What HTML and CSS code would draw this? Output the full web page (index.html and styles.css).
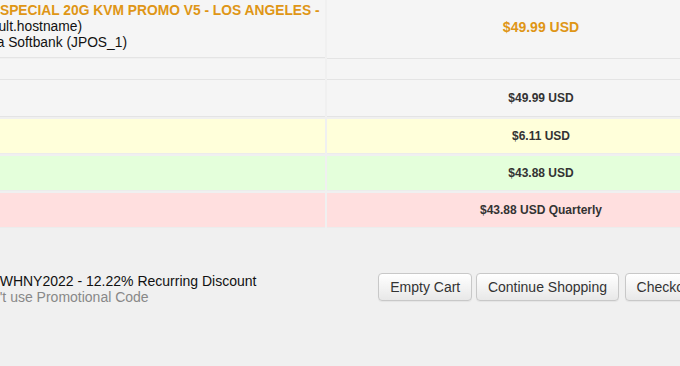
FILE: index.html
```html
<!DOCTYPE html>
<html lang="en">
<head>
    <title>Shopping Cart</title>
    <link rel="stylesheet" href="styles.css">
</head>
<body>
    <div class="cart">
        <div class="row product">
            <div class="cell desc">
                <div class="name">HOT SPECIAL 20G KVM PROMO V5 - LOS ANGELES -</div>
                <div>(default.hostname)</div>
                <div>JP via Softbank (JPOS_1)</div>
            </div>
            <div class="cell price">$49.99 USD</div>
        </div>
        <div class="row blank">
            <div class="cell"></div>
            <div class="cell"></div>
        </div>
        <div class="row subtotal">
            <div class="cell"></div>
            <div class="cell amount">$49.99 USD</div>
        </div>
        <div class="row discount">
            <div class="cell"></div>
            <div class="cell amount">$6.11 USD</div>
        </div>
        <div class="row total">
            <div class="cell"></div>
            <div class="cell amount">$43.88 USD</div>
        </div>
        <div class="row recurring">
            <div class="cell"></div>
            <div class="cell amount">$43.88 USD Quarterly</div>
        </div>

        <div class="actions">
            <div class="promo">
                <div>JPSWHNY2022 - 12.22% Recurring Discount</div>
                <div class="remove">Don't use Promotional Code</div>
            </div>
            <div class="buttons">
                <button class="btn">Empty Cart</button>
                <button class="btn">Continue Shopping</button>
                <button class="btn checkout">Checkout</button>
            </div>
        </div>
    </div>
</body>
</html>
```

FILE: styles.css
```css
body {
    margin: 0;
    background-color: #f0f0f0;
    font-family: "Liberation Sans", Arial, sans-serif;
    font-size: 13px;
    color: #222;
    overflow: hidden;
}

.cart {
    width: 795px;
    margin: -4px 0 0 -40px;
}

.row {
    display: grid;
    grid-template-columns: 365px 428px;
    column-gap: 2px;
}

.cell {
    background-color: #f5f5f5;
    border-bottom: 1px solid #e4e4e4;
}

.product .cell {
    height: 62px;
}

.desc {
    box-sizing: border-box;
    padding: 7px 7px;
    font-size: 13.8px;
    line-height: 16px;
    color: #111;
    white-space: nowrap;
}

.desc .name {
    color: #df9616;
    font-weight: bold;
}

.price,
.amount {
    display: flex;
    align-items: center;
    justify-content: center;
    font-weight: bold;
}

.price {
    color: #df9616;
    font-size: 14px;
}

.amount {
    font-size: 12px;
    color: #333;
}

.blank .cell {
    height: 20px;
}

.subtotal .cell {
    height: 36px;
}

.discount,
.total,
.recurring {
    margin-top: 2px;
}

.discount .cell,
.total .cell,
.recurring .cell {
    height: 34px;
    border-bottom-color: #ececec;
}

.discount .cell {
    background-color: #ffffda;
}

.total .cell {
    background-color: #e4ffdb;
}

.recurring .cell {
    background-color: #ffdfdf;
}

.actions {
    display: grid;
    grid-template-columns: 365px 428px;
    column-gap: 2px;
    margin-top: 45px;
}

.promo {
    padding-left: 14px;
    font-size: 14px;
    line-height: 16px;
    color: #111;
}

.promo .remove {
    color: #888;
}

.buttons {
    padding-left: 4px;
    text-align: center;
}

.btn {
    height: 28px;
    padding: 0 11px;
    font-family: "Liberation Sans", Arial, sans-serif;
    font-size: 14px;
    color: #333;
    background: linear-gradient(#ffffff, #e8e8e8);
    border: 1px solid #c8c8c8;
    border-radius: 4px;
    box-shadow: 0 1px 1px rgba(0, 0, 0, 0.05);
    cursor: pointer;
}

.checkout {
    margin-left: 2px;
}
```
